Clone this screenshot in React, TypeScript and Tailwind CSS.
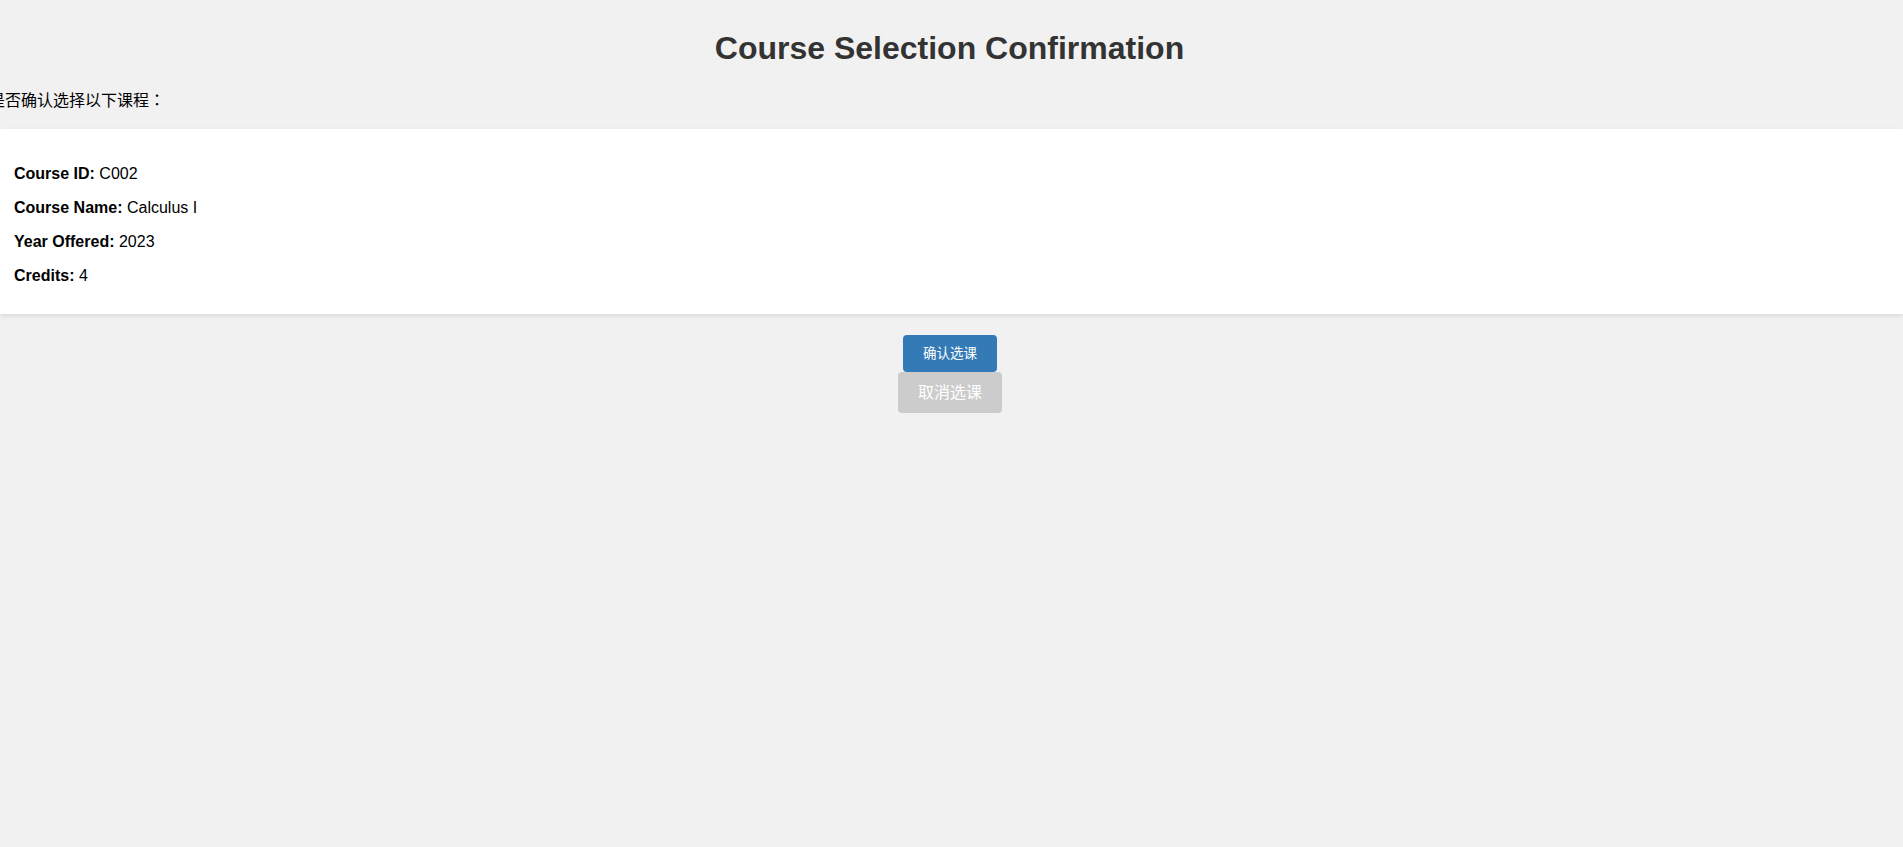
export default function App() {
  return (
    <div className="min-h-[847px] bg-[#f1f1f1] font-['Liberation_Sans','Noto_Sans_CJK_SC',sans-serif] text-black">
      <h1 className="pt-[30px] pr-[4px] text-center text-[32px] leading-[37px] font-bold text-[#333]">
        Course Selection Confirmation
      </h1>
      <p className="mt-[23px] -ml-[11px] text-[16px] leading-[18px] font-['Noto_Sans_CJK_SC',sans-serif]">
        是否确认选择以下课程<span className="font-['Noto_Sans_CJK_JP',sans-serif]">：</span>
      </p>
      <div className="mt-[21px] bg-white pl-[14px] pt-[36px] pb-[29px] shadow-[0_2px_5px_rgba(0,0,0,0.1)]">
        <div className="flex flex-col gap-[16px] text-[16px] leading-[18px]">
          <p>
            <span className="font-bold">Course ID:</span> C002
          </p>
          <p>
            <span className="font-bold">Course Name:</span> Calculus I
          </p>
          <p>
            <span className="font-bold">Year Offered:</span> 2023
          </p>
          <p>
            <span className="font-bold">Credits:</span> 4
          </p>
        </div>
      </div>
      <div className="mt-[21px] pr-[3px] flex flex-col items-center">
        <button className="h-[37px] rounded-[4px] bg-[#337ab7] px-[20px] text-[13.5px] leading-[17px] text-white">
          确认选课
        </button>
        <button className="h-[41px] rounded-[4px] bg-[#cccccc] px-[20px] text-[16px] leading-[21px] text-white">
          取消选课
        </button>
      </div>
    </div>
  );
}
